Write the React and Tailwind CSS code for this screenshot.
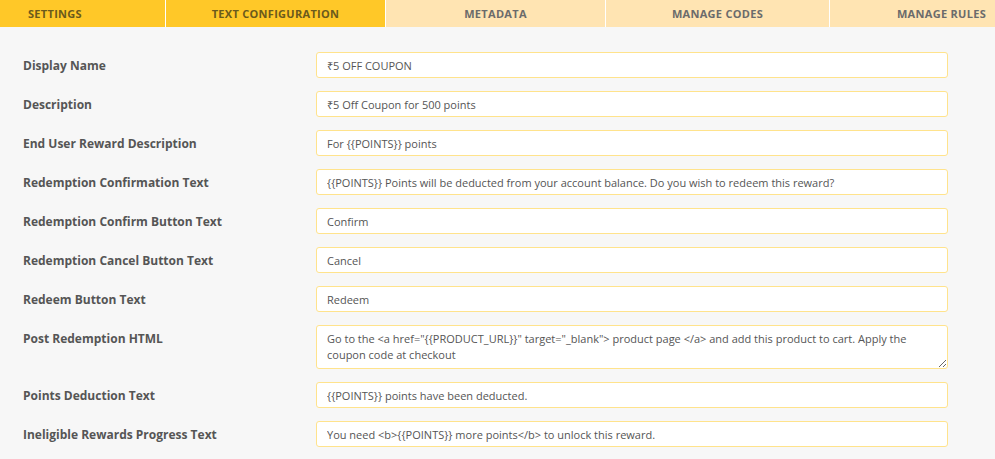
const tabs = [
  { label: "Settings", active: true, w: "w-[220px] -ml-[55px]" },
  { label: "Text Configuration", active: true, w: "w-[220px]" },
  { label: "Metadata", active: false, w: "w-[220px]" },
  { label: "Manage Codes", active: false, w: "w-[224px]" },
  { label: "Manage Rules", active: false, w: "w-[224px]" },
];

const fields = [
  { label: "Display Name", value: "₹5 OFF COUPON" },
  { label: "Description", value: "₹5 Off Coupon for 500 points" },
  { label: "End User Reward Description", value: "For {{POINTS}} points" },
  {
    label: "Redemption Confirmation Text",
    value:
      "{{POINTS}} Points will be deducted from your account balance. Do you wish to redeem this reward?",
  },
  { label: "Redemption Confirm Button Text", value: "Confirm" },
  { label: "Redemption Cancel Button Text", value: "Cancel" },
  { label: "Redeem Button Text", value: "Redeem" },
  {
    label: "Post Redemption HTML",
    value:
      'Go to the <a href="{{PRODUCT_URL}}" target="_blank"> product page </a> and add this product to cart. Apply the coupon code at checkout',
    multiline: true,
  },
  { label: "Points Deduction Text", value: "{{POINTS}} points have been deducted." },
  {
    label: "Ineligible Rewards Progress Text",
    value: "You need <b>{{POINTS}} more points</b> to unlock this reward.",
  },
];

export default function App() {
  return (
    <div className="min-h-[459px] bg-[#f7f7f7] font-['Open_Sans',sans-serif] overflow-hidden">
      {/* tabs */}
      <div className="flex h-[27px] overflow-hidden whitespace-nowrap">
        {tabs.map((t, i) => (
          <div
            key={t.label}
            className={`${t.w} shrink-0 flex items-center justify-center pt-[1px] text-[11px] font-bold uppercase tracking-[0.3px] ${
              i > 0 ? "border-l border-white" : ""
            } ${t.active ? "bg-[#ffc828] text-[#6b5a1c]" : "bg-[#ffe4b2] text-[#6b6b6b]"}`}
          >
            {t.label}
          </div>
        ))}
      </div>

      {/* form */}
      <form className="pl-[23px] pr-[47px] pt-[25px] flex flex-col gap-[13px]" onSubmit={(e) => e.preventDefault()}>
        {fields.map((f) => (
          <div key={f.label} className="flex items-start">
            <label className="w-[293px] shrink-0 h-[26px] text-[12px] leading-[28px] font-bold text-[#555]">
              {f.label}
            </label>
            {f.multiline ? (
              <textarea
                readOnly
                defaultValue={f.value}
                className="flex-1 h-[44px] px-[10px] pt-[5px] pb-[2px] text-[11px] leading-[16px] text-[#555] bg-white border border-[#ffe38c] rounded-[3px] outline-none resize-y"
              />
            ) : (
              <input
                readOnly
                value={f.value}
                className="flex-1 h-[26px] px-[10px] pt-[1px] text-[11px] text-[#555] bg-white border border-[#ffe38c] rounded-[3px] outline-none"
              />
            )}
          </div>
        ))}
      </form>
    </div>
  );
}
